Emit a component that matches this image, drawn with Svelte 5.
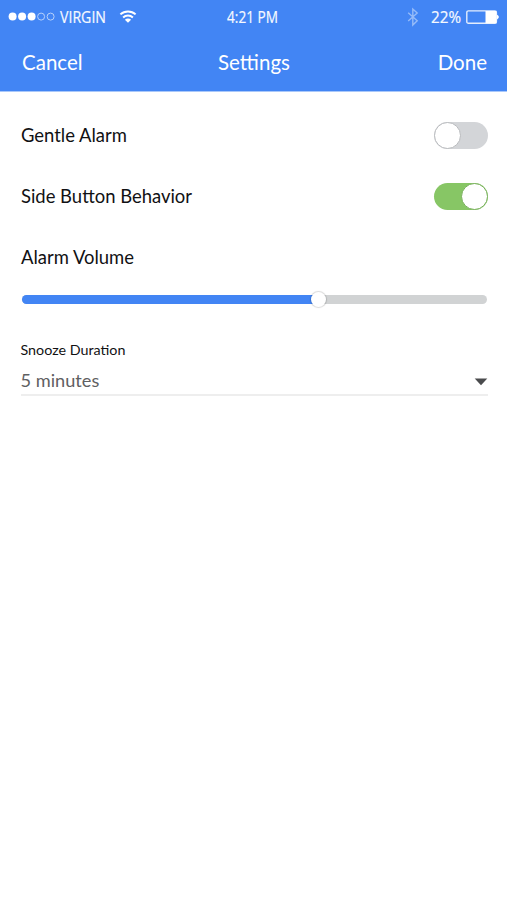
<script lang="ts">
  let gentleAlarm = $state(false);
  let sideButton = $state(true);
  let volume = $state(63.8);

  const signal = [true, true, true, false, false];
</script>

<div class="screen">
  <header>
    <div class="status">
      <svg class="signal" width="48" height="10" viewBox="0 0 48 10">
        {#each signal as on, i (i)}
          <circle cx={4.6 + i * 9.5} cy="4.6" r={on ? 4 : 3.5} class:on />
        {/each}
      </svg>
      <svg class="carrier" width="48" height="24">
        <text x="0" y="18" textLength="46" lengthAdjust="spacingAndGlyphs">VIRGIN</text>
      </svg>
      <svg class="wifi" width="18" height="14" viewBox="0 0 18 14">
        <path d="M1.4 4.4C5.6.4 12.4.4 16.6 4.4M4.1 7.4c2.8-2.5 7-2.5 9.8 0" />
        <path class="dot" d="M5.9 9.7c1.9-1.6 4.3-1.6 6.2 0L9 12.7z" />
      </svg>
      <svg class="clock" width="54" height="24">
        <text x="0" y="17.6" textLength="51" lengthAdjust="spacingAndGlyphs">4:21 PM</text>
      </svg>
      <svg class="bluetooth" width="12" height="18" viewBox="0 0 12 18">
        <path d="M1.2 4.8l9 8L5.8 17V1l4.4 4.1-9 8" />
      </svg>
      <svg class="percent" width="32" height="24">
        <text x="0" y="17.6" textLength="30" lengthAdjust="spacingAndGlyphs">22%</text>
      </svg>
      <svg class="battery" width="34" height="15" viewBox="0 0 34 15">
        <rect x=".8" y=".9" width="29.6" height="12.4" rx="1.6" />
        <path d="M19.5 1h10.9v12.2H19.5zM31 4.8c1.3.5 1.8 1.3 1.8 2.3s-.5 1.8-1.8 2.3z" />
      </svg>
    </div>
    <nav>
      <button>Cancel</button>
      <h1>Settings</h1>
      <button>Done</button>
    </nav>
  </header>

  <main>
    <div class="row">
      <span>Gentle Alarm</span>
      <button
        class="toggle"
        class:on={gentleAlarm}
        role="switch"
        aria-checked={gentleAlarm}
        aria-label="Gentle Alarm"
        onclick={() => (gentleAlarm = !gentleAlarm)}
      ><i></i></button>
    </div>
    <div class="row">
      <span>Side Button Behavior</span>
      <button
        class="toggle"
        class:on={sideButton}
        role="switch"
        aria-checked={sideButton}
        aria-label="Side Button Behavior"
        onclick={() => (sideButton = !sideButton)}
      ><i></i></button>
    </div>
    <div class="row">
      <span>Alarm Volume</span>
    </div>
    <div class="slider">
      <div class="fill" style={`width:${volume}%`}></div>
      <div class="thumb" style={`left:${volume}%`}></div>
    </div>
    <div class="field">
      <div class="label">Snooze Duration</div>
      <div class="select">
        <span>5 minutes</span>
        <svg width="14" height="8" viewBox="0 0 14 8"><path d="M.7.6h12.6L7 7.3z" /></svg>
      </div>
    </div>
  </main>
</div>

<style>
  :global(body) {
    margin: 0;
    background: #fff;
  }

  .screen {
    width: 507px;
    height: 900px;
    overflow: hidden;
    background: #fff;
    color: #111113;
    font-family: Lato, sans-serif;
  }

  header {
    box-sizing: border-box;
    height: 92px;
    border-bottom: 1px solid #a9c8fa;
    background: #4285f4;
    color: #fff;
  }

  .status {
    display: flex;
    align-items: center;
    height: 34px;
    padding-left: 8px;
  }

  .status svg {
    flex: none;
    overflow: visible;
  }

  .status text {
    font-family: 'Open Sans', sans-serif;
    font-size: 16px;
    fill: #f6f9ff;
    stroke: #f6f9ff;
    stroke-width: 0.2;
  }

  .status .carrier text {
    font-size: 16.6px;
  }

  .status .clock text {
    font-size: 15.5px;
  }

  .signal circle {
    fill: none;
    stroke: #b7d1fb;
    stroke-width: 1;
  }

  .signal circle.on {
    fill: #fff;
    stroke: none;
  }

  .carrier {
    margin-left: 4px;
  }

  .wifi {
    margin-left: 11px;
  }

  .wifi path {
    fill: none;
    stroke: #fff;
    stroke-width: 2;
  }

  .wifi .dot {
    fill: #fff;
    stroke: none;
  }

  .clock {
    margin-left: 90px;
  }

  .bluetooth {
    margin-left: 126px;
  }

  .bluetooth path {
    fill: none;
    stroke: #96bbf8;
    stroke-width: 1.4;
  }

  .percent {
    margin-left: 12px;
  }

  .battery {
    margin-left: 2.5px;
  }

  .battery rect {
    fill: none;
    stroke: #e3edfd;
    stroke-width: 1.4;
  }

  .battery path {
    fill: #fff;
  }

  nav {
    display: grid;
    grid-template-columns: 1fr auto 1fr;
    align-items: center;
    height: 56px;
    padding: 0 20px 0 22px;
  }

  button {
    padding: 0;
    border: 0;
    background: none;
    color: inherit;
    font: inherit;
    cursor: pointer;
  }

  nav button,
  h1 {
    margin: 0;
    font-size: 20.5px;
    font-weight: 400;
    line-height: 28px;
  }

  h1 {
    margin-right: 1px;
  }

  nav button:first-child {
    justify-self: start;
  }

  nav button:last-child {
    justify-self: end;
  }

  main {
    padding: 12.4px 19.5px 0 21px;
  }

  .row {
    display: flex;
    align-items: center;
    justify-content: space-between;
    height: 61.4px;
    font-size: 18.45px;
  }

  .row span {
    margin-bottom: 1px;
  }

  .row:nth-child(3) {
    height: 60.8px;
  }

  .toggle {
    display: flex;
    width: 54px;
    height: 27px;
    border-radius: 14px;
    background: #d3d5d8;
  }

  .toggle i {
    box-sizing: border-box;
    width: 27px;
    height: 27px;
    border: 1px solid #b9bbbe;
    border-radius: 50%;
    background: #fff;
  }

  .toggle.on {
    justify-content: flex-end;
    background: #87c665;
  }

  .toggle.on i {
    border-color: #78b05b;
  }

  .slider {
    position: relative;
    height: 9px;
    margin: 7px 0.5px 0 0.5px;
    border-radius: 5px;
    background: #d1d3d4;
  }

  .fill {
    height: 100%;
    border-radius: 5px 0 0 5px;
    background: #4285f4;
  }

  .thumb {
    position: absolute;
    top: -3px;
    width: 15px;
    height: 15px;
    margin-left: -7.5px;
    border-radius: 50%;
    background: #fff;
    box-shadow: 0 0 1px 1px #00000026;
  }

  .field {
    margin: 37px 0 0 -0.5px;
  }

  .label {
    font-size: 14.3px;
    line-height: 18px;
  }

  .select {
    box-sizing: border-box;
    display: flex;
    align-items: center;
    justify-content: space-between;
    height: 37px;
    padding-top: 7px;
    border-bottom: 2px solid #eee;
    color: #5f6062;
    font-size: 18.2px;
  }

  .select svg {
    margin-top: 5px;
    fill: #4a4b4d;
  }
</style>
